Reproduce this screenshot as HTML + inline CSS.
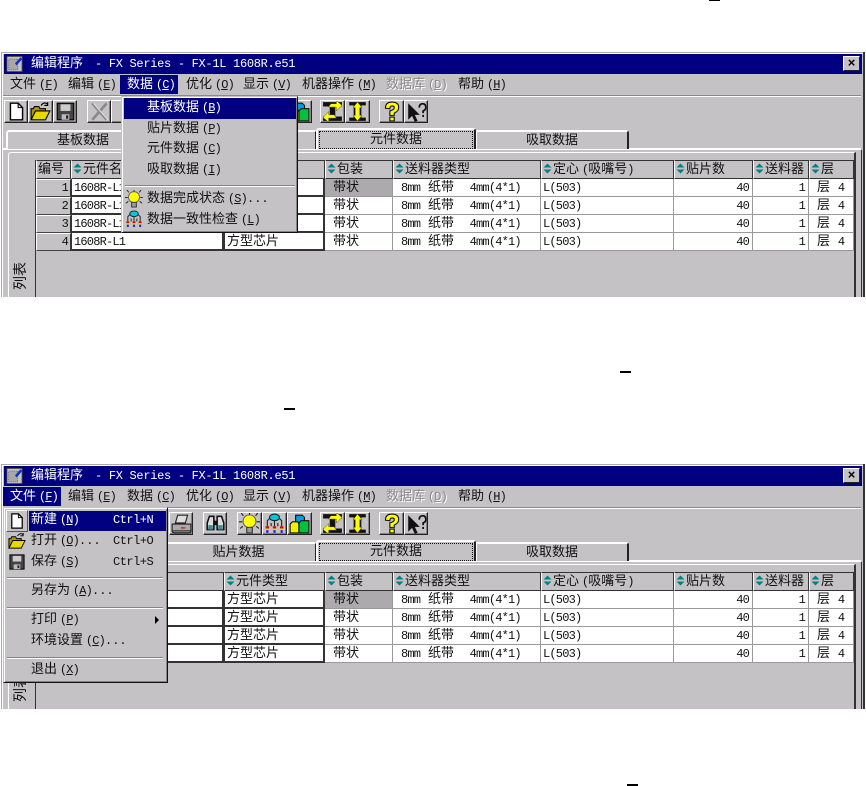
<!DOCTYPE html>
<html><head><meta charset="utf-8">
<style>
html,body{margin:0;padding:0;background:#fff}
body{width:866px;height:786px;position:relative;overflow:hidden;font-family:"Liberation Mono","WenQuanYi Zen Hei","Noto Sans CJK SC",monospace;font-size:13px;color:#111}
.w{position:absolute;left:0;width:866px;height:297px;overflow:hidden}
.a{position:absolute}
.t{position:absolute;white-space:nowrap;line-height:16px}
i{font-style:normal;font-size:12px;letter-spacing:-.8px;word-spacing:-3.6px}
.dash{position:absolute;background:#000;height:2px;width:11px}
.btn{position:absolute;top:100px;height:23px;background:#c4c2c4;border:1px solid;border-color:#fff #222 #222 #fff;box-sizing:border-box;box-shadow:inset -1px -1px 0 #848284}
.btn svg{position:absolute;left:1px;top:0;width:21px;height:21px}
.tab{position:absolute;top:129px;height:19px;box-sizing:border-box;background:#c4c2c4;border-top:2px solid #fff;border-left:2px solid #fff;border-right:2px solid #222;border-radius:3px 3px 0 0;text-align:center;line-height:17px}
table{position:absolute;left:36px;top:160px;border-collapse:separate;border-spacing:0;table-layout:fixed;width:818px;font-size:13px}
td,th{padding:0;margin:0;box-sizing:border-box;white-space:nowrap;overflow:hidden;font-weight:normal;text-align:left;vertical-align:middle;line-height:14px}
th{background:#c4c2c4;height:19px;border:1px solid;border-color:#333 #333 #333 #fff;padding-left:1px}
th svg{width:9px;height:11px;vertical-align:-1px;margin-right:1px}
td{background:#fff;border-right:1px solid #999;border-bottom:1px solid #999;padding-left:2px}
td.n{background:#c4c2c4;text-align:right;padding-right:2px;border:1px solid;border-color:#fff #333 #444 #fff}
td.s{border:0 solid #333;border-width:0 2px 2px 1px;padding-top:2px}
td.g{background:#acaaac}
td.r{text-align:right;padding-right:3px}
td.p{padding-left:8px}
td.f{padding-left:8px;white-space:pre}
.menu{position:absolute;background:#c4c2c4;border:1px solid;border-color:#c4c2c4 #111 #111 #c4c2c4;box-shadow:inset 1px 1px 0 #fff,inset -1px -1px 0 #848284;box-sizing:border-box}
.hl{position:absolute;background:#000080}
.sep{position:absolute;height:1px;background:#848284;border-bottom:1px solid #fff}
.wt{color:#fff}
.gr{color:#8a888a;text-shadow:1px 1px 0 #fff}
.vt{position:absolute;left:8px;top:268px;width:28px;height:16px;line-height:16px;font-size:14px;text-align:center;white-space:nowrap;transform:rotate(-90deg)}
</style></head>
<body>
<svg width="0" height="0" style="position:absolute">
<defs>
<symbol id="sort" viewBox="0 0 9 11"><path d="M4.500 0.500 8.500 4.500H.5zM.5 6.500H8.500L4.500 10.500z" fill="#008284"/></symbol>
<symbol id="new" viewBox="0 0 19 19"><path d="M4 2H11L15 6V17H4z" fill="#fff" stroke="#000" stroke-width="1.3"/><path d="M11 2V6H15" fill="none" stroke="#000"/></symbol>
<symbol id="open" viewBox="0 0 19 19"><path d="M1 17V7H3L4 5H8L9 7H14V9" fill="#a89800" stroke="#000"/><path d="M1 17 5 9H18L14 17z" fill="#e8d800" stroke="#000"/><path d="M10 4Q13 0 16 3M16 1V4H13" fill="none" stroke="#000"/></symbol>
<symbol id="save" viewBox="0 0 19 19"><path d="M2 2H17V17H2z" fill="#444" stroke="#000"/><path d="M5 3H14V9H5z" fill="#ccc"/><path d="M6 12H13V17H6z" fill="#bbb"/><path d="M10 13H12V16H10z" fill="#222"/></symbol>
<symbol id="cut" viewBox="0 0 19 19"><path d="M3 2 16 17M16 2 3 17" stroke="#8a888a" stroke-width="2.400" fill="none"/><path d="M4 2 17 17" stroke="#eee" stroke-width=".8"/></symbol>
<symbol id="print" viewBox="0 0 19 19"><path d="M6 2H15L13 9H4z" fill="#ddd" stroke="#222"/><path d="M1 10H18V16H1z" fill="#aaa" stroke="#222"/><path d="M1 16Q1 18 3 18H16Q18 18 18 16" fill="#777" stroke="#222"/><path d="M9 13H13V14H9z" fill="#d00"/></symbol>
<symbol id="bino" viewBox="0 0 19 19"><path d="M4 3H8V15H2V9zM11 3H15L17 9V15H11z" fill="#ddd" stroke="#111" stroke-width="1.400"/><path d="M8 7H11V11H8z" fill="#111"/><path d="M3 11H7V15H3zM12 11H16V15H12z" fill="#3f8a94"/></symbol>
<symbol id="bulb" viewBox="0 0 19 19"><circle cx="9.500" cy="7.500" r="5.800" fill="#ffff00" stroke="#666"/><path d="M7 13H12V18H7z" fill="#999" stroke="#333"/><path d="M9.500 0V1.500M2 0 4 2.500M17 0 15 2.500M0 8H3M16 8H19M1 14 3.500 12M18 14 15.500 12" stroke="#222"/></symbol>
<symbol id="net" viewBox="0 0 19 19"><ellipse cx="9.500" cy="4" rx="4.500" ry="3" fill="#00c8e0" stroke="#222"/><path d="M5 5 3 7V12M14 5 16 7V12M9.500 7V12M6.500 9V12M12.500 9V12" stroke="#222" fill="none"/><path d="M1.500 12H4.500V14H1.500zM8 12H11V14H8zM14.500 12H17.500V14H14.500z" fill="#e00000"/><path d="M1.500 14H4.500V15.500H1.500zM8 14H11V15.500H8zM14.500 14H17.500V15.500H14.500z" fill="#e8e000"/><path d="M2 15.500H4V18H2zM8.500 15.500H10.500V18H8.500zM15 15.500H17V18H15z" fill="#2020e0"/></symbol>
<symbol id="blocks" viewBox="0 0 19 19"><path d="M6 2H12L14 4V10H6z" fill="#00a0e0" stroke="#111"/><path d="M1 10 3 8H8L9 10V18H1z" fill="#f0f000" stroke="#111"/><path d="M9 9 11 7H18V18H9z" fill="#00c040" stroke="#111"/></symbol>
<symbol id="swap" viewBox="0 0 19 19"><path d="M1 1H18V5H12V14H18V18H1V14H7V5H1z" fill="#111"/><path d="M1 15 6 9.500V12.500H11L13 15.500H6V19zM18 4 13 -.5V2.500H8L6 5.500H13V9z" fill="#ffff00" stroke="#444" stroke-width=".4"/></symbol>
<symbol id="ibeam" viewBox="0 0 19 19"><path d="M2 1H17V4H13V15H17V18H2V15H6V4H2z" fill="#111"/><path d="M9.500 1 13.500 6H11.500V13H13.500L9.500 18 5.500 13H7.500V6H5.500z" fill="#ffff00" stroke="#444" stroke-width=".4"/></symbol>
<symbol id="help" viewBox="0 0 19 19"><path d="M4 6.500Q4 1 10 1Q16 1 16 6Q16 9 12 11V13H8V9Q12 8 12 6Q12 4.500 10 4.500Q8 4.500 8 7z" fill="#ffff00" stroke="#111" stroke-width="1"/><path d="M8 14.500H12V18H8z" fill="#ffff00" stroke="#111" stroke-width="1"/></symbol>
<symbol id="arrq" viewBox="0 0 19 19"><path d="M2 2V17L5.500 13.500 8 19 10.500 18 8 12.500H12.500z" fill="#111"/><path d="M12 6Q12 2.500 15 2.500Q18 2.500 18 6Q18 8 15.500 9V11M15.500 12.500V14.500" fill="none" stroke="#111" stroke-width="1.600"/></symbol>
<symbol id="app" viewBox="0 0 19 19"><path d="M1 1H18V18H1z" fill="#c4c2c4" stroke="#444"/><path d="M3 4H13V16H3z" fill="#a8a8a8" stroke="#666" stroke-dasharray="1 1"/><path d="M10 9 16 2 18 4 12 11z" fill="#1030d0"/></symbol>
</defs>
</svg>

<div class="dash" style="left:709px;top:-1px"></div>
<div class="dash" style="left:620px;top:371px"></div>
<div class="dash" style="left:284px;top:408px"></div>
<div class="dash" style="left:627px;top:784px"></div>

<!-- WINDOW 1 -->
<div class="w" style="top:0">
<div class="a" style="left:1px;top:52px;width:864px;height:246px;background:#c4c2c4;border-top:1px solid #aaa;border-left:1px solid #aaa;box-sizing:border-box;box-shadow:inset 1px 1px 0 #fff"></div>
<div class="a" style="left:863px;top:52px;width:2px;height:246px;background:#333"></div>
<div class="a" style="left:4px;top:54px;width:858px;height:20px;background:#000080"></div>
<svg class="a" style="left:6px;top:55px;width:17px;height:18px"><use href="#app"/></svg>
<div class="t wt" style="left:31px;top:56px;font-size:13px">编辑程序<i style="letter-spacing:-.3px;word-spacing:0;margin-left:12px">- FX Series - FX-1L 1608R.e51</i></div>
<div class="a" style="left:843px;top:56px;width:17px;height:15px;background:#c4c2c4;border:1px solid;border-color:#fff #222 #222 #fff;box-sizing:border-box;text-align:center;font:bold 13px/12px 'Liberation Sans',sans-serif;color:#000">×</div>
<div class="a" style="left:3px;top:95px;width:858px;height:1px;background:#8a888a;border-bottom:1px solid #fff"></div>
<div class="hl" style="left:120px;top:75px;width:58px;height:19px"></div>
<div class="t" style="left:10px;top:77px">文件<i> (<u>F</u>)</i></div>
<div class="t" style="left:68px;top:77px">编辑<i> (<u>E</u>)</i></div>
<div class="t wt" style="left:127px;top:77px">数据<i> (<u>C</u>)</i></div>
<div class="t" style="left:186px;top:77px">优化<i> (<u>O</u>)</i></div>
<div class="t" style="left:243px;top:77px">显示<i> (<u>V</u>)</i></div>
<div class="t" style="left:302px;top:77px">机器操作<i> (<u>M</u>)</i></div>
<div class="t gr" style="left:386px;top:77px">数据库<i> (<u>D</u>)</i></div>
<div class="t" style="left:458px;top:77px">帮助<i> (<u>H</u>)</i></div>

<div class="btn" style="left:4px;width:24px"><svg><use href="#new"/></svg></div>
<div class="btn" style="left:28px;width:25px"><svg><use href="#open"/></svg></div>
<div class="btn" style="left:53px;width:24px"><svg><use href="#save"/></svg></div>
<div class="btn" style="left:87px;width:24px"><svg><use href="#cut"/></svg></div>
<div class="btn" style="left:111px;width:24px"></div>
<div class="btn" style="left:287px;width:25px"><svg><use href="#blocks"/></svg></div>
<div class="btn" style="left:320px;width:25px"><svg><use href="#swap"/></svg></div>
<div class="btn" style="left:345px;width:25px"><svg><use href="#ibeam"/></svg></div>
<div class="btn" style="left:379px;width:25px"><svg><use href="#help"/></svg></div>
<div class="btn" style="left:404px;width:24px"><svg><use href="#arrq"/></svg></div>

<div class="a" style="left:3px;top:148px;width:858px;height:2px;background:#fff"></div>
<div class="tab" style="left:6px;width:154px;top:130px">基板数据</div>
<div class="tab" style="left:160px;width:157px;top:130px">贴片数据</div>
<div class="tab" style="left:475px;width:154px;top:130px">吸取数据</div>
<div class="tab" style="left:316px;width:160px;height:21px;top:128px;z-index:2"><div class="a" style="left:1px;top:1px;right:1px;height:16px;border:1px dotted #111;line-height:15px">元件数据</div></div>

<div class="a" style="left:8px;top:152px;width:848px;height:150px;border-left:1px solid #fff;border-top:1px solid #fff;border-right:2px solid #333;box-sizing:border-box;border-radius:3px 0 0 0"></div>
<div class="a" style="left:861px;top:150px;width:1px;height:150px;background:#333"></div>
<div class="a" style="left:35px;top:160px;width:1px;height:140px;background:#333"></div>
<div class="vt">列表</div>

<table><colgroup><col style="width:35px"><col style="width:153px"><col style="width:101px"><col style="width:68px"><col style="width:148px"><col style="width:133px"><col style="width:79px"><col style="width:56px"><col style="width:45px"></colgroup>
<tr><th>编号</th><th><svg><use href="#sort"/></svg>元件名称</th><th><svg><use href="#sort"/></svg>元件类型</th><th><svg><use href="#sort"/></svg>包装</th><th><svg><use href="#sort"/></svg>送料器类型</th><th><svg><use href="#sort"/></svg>定心<i> (</i>吸嘴号<i>)</i></th><th><svg><use href="#sort"/></svg>贴片数</th><th><svg><use href="#sort"/></svg>送料器</th><th><svg><use href="#sort"/></svg>层</th></tr>
<tr style="height:18px"><td class="n"><i>1</i></td><td class="s"><i>1608R-L1</i></td><td class="s">方型芯片</td><td class="p g">带状</td><td class="f"><i>8mm</i> 纸带  <i>4mm(4*1)</i></td><td><i>L(503)</i></td><td class="r"><i>40</i></td><td class="r"><i>1</i></td><td class="p">层 <i>4</i></td></tr>
<tr style="height:18px"><td class="n"><i>2</i></td><td class="s"><i>1608R-L1</i></td><td class="s">方型芯片</td><td class="p">带状</td><td class="f"><i>8mm</i> 纸带  <i>4mm(4*1)</i></td><td><i>L(503)</i></td><td class="r"><i>40</i></td><td class="r"><i>1</i></td><td class="p">层 <i>4</i></td></tr>
<tr style="height:18px"><td class="n"><i>3</i></td><td class="s"><i>1608R-L1</i></td><td class="s">方型芯片</td><td class="p">带状</td><td class="f"><i>8mm</i> 纸带  <i>4mm(4*1)</i></td><td><i>L(503)</i></td><td class="r"><i>40</i></td><td class="r"><i>1</i></td><td class="p">层 <i>4</i></td></tr>
<tr style="height:18px"><td class="n"><i>4</i></td><td class="s"><i>1608R-L1</i></td><td class="s">方型芯片</td><td class="p">带状</td><td class="f"><i>8mm</i> 纸带  <i>4mm(4*1)</i></td><td><i>L(503)</i></td><td class="r"><i>40</i></td><td class="r"><i>1</i></td><td class="p">层 <i>4</i></td></tr>
</table>

<div class="menu" style="left:121px;top:96px;width:177px;height:137px;z-index:5">
<div class="hl" style="left:2px;top:1px;width:172px;height:21px"></div>
<div class="t wt" style="left:25px;top:3px">基板数据<i> (<u>B</u>)</i></div>
<div class="t" style="left:25px;top:24px">贴片数据<i> (<u>P</u>)</i></div>
<div class="t" style="left:25px;top:44px">元件数据<i> (<u>C</u>)</i></div>
<div class="t" style="left:25px;top:65px">吸取数据<i> (<u>I</u>)</i></div>
<div class="sep" style="left:3px;top:88px;width:170px"></div>
<svg class="a" style="left:3px;top:93px;width:18px;height:18px"><use href="#bulb"/></svg>
<div class="t" style="left:25px;top:94px">数据完成状态<i> (<u>S</u>)</i><i style="letter-spacing:0">...</i></div>
<svg class="a" style="left:3px;top:113px;width:18px;height:18px"><use href="#net"/></svg>
<div class="t" style="left:25px;top:115px">数据一致性检查<i> (<u>L</u>)</i></div>
</div>
</div>

<!-- WINDOW 2 -->
<div class="w" style="top:412px">
<div class="a" style="left:1px;top:52px;width:864px;height:246px;background:#c4c2c4;border-top:1px solid #aaa;border-left:1px solid #aaa;box-sizing:border-box;box-shadow:inset 1px 1px 0 #fff"></div>
<div class="a" style="left:863px;top:52px;width:2px;height:246px;background:#333"></div>
<div class="a" style="left:4px;top:54px;width:858px;height:20px;background:#000080"></div>
<svg class="a" style="left:6px;top:55px;width:17px;height:18px"><use href="#app"/></svg>
<div class="t wt" style="left:31px;top:56px;font-size:13px">编辑程序<i style="letter-spacing:-.3px;word-spacing:0;margin-left:12px">- FX Series - FX-1L 1608R.e51</i></div>
<div class="a" style="left:843px;top:56px;width:17px;height:15px;background:#c4c2c4;border:1px solid;border-color:#fff #222 #222 #fff;box-sizing:border-box;text-align:center;font:bold 13px/12px 'Liberation Sans',sans-serif;color:#000">×</div>
<div class="a" style="left:3px;top:95px;width:858px;height:1px;background:#8a888a;border-bottom:1px solid #fff"></div>
<div class="hl" style="left:3px;top:75px;width:58px;height:19px"></div>
<div class="t wt" style="left:10px;top:77px">文件<i> (<u>F</u>)</i></div>
<div class="t" style="left:68px;top:77px">编辑<i> (<u>E</u>)</i></div>
<div class="t" style="left:127px;top:77px">数据<i> (<u>C</u>)</i></div>
<div class="t" style="left:186px;top:77px">优化<i> (<u>O</u>)</i></div>
<div class="t" style="left:243px;top:77px">显示<i> (<u>V</u>)</i></div>
<div class="t" style="left:302px;top:77px">机器操作<i> (<u>M</u>)</i></div>
<div class="t gr" style="left:386px;top:77px">数据库<i> (<u>D</u>)</i></div>
<div class="t" style="left:458px;top:77px">帮助<i> (<u>H</u>)</i></div>

<div class="btn" style="left:169px;width:24px"><svg><use href="#print"/></svg></div>
<div class="btn" style="left:203px;width:24px"><svg><use href="#bino"/></svg></div>
<div class="btn" style="left:237px;width:25px"><svg><use href="#bulb"/></svg></div>
<div class="btn" style="left:262px;width:25px"><svg><use href="#net"/></svg></div>
<div class="btn" style="left:287px;width:25px"><svg><use href="#blocks"/></svg></div>
<div class="btn" style="left:320px;width:25px"><svg><use href="#swap"/></svg></div>
<div class="btn" style="left:345px;width:25px"><svg><use href="#ibeam"/></svg></div>
<div class="btn" style="left:379px;width:25px"><svg><use href="#help"/></svg></div>
<div class="btn" style="left:404px;width:24px"><svg><use href="#arrq"/></svg></div>

<div class="a" style="left:3px;top:148px;width:858px;height:2px;background:#fff"></div>
<div class="tab" style="left:6px;width:154px;top:130px">基板数据</div>
<div class="tab" style="left:160px;width:157px;top:130px">贴片数据</div>
<div class="tab" style="left:475px;width:154px;top:130px">吸取数据</div>
<div class="tab" style="left:316px;width:160px;height:21px;top:128px;z-index:2"><div class="a" style="left:1px;top:1px;right:1px;height:16px;border:1px dotted #111;line-height:15px">元件数据</div></div>

<div class="a" style="left:8px;top:152px;width:848px;height:150px;border-left:1px solid #fff;border-top:1px solid #fff;border-right:2px solid #333;box-sizing:border-box;border-radius:3px 0 0 0"></div>
<div class="a" style="left:861px;top:150px;width:1px;height:150px;background:#333"></div>
<div class="a" style="left:35px;top:160px;width:1px;height:140px;background:#333"></div>
<div class="vt">列表</div>

<table><colgroup><col style="width:35px"><col style="width:153px"><col style="width:101px"><col style="width:68px"><col style="width:148px"><col style="width:133px"><col style="width:79px"><col style="width:56px"><col style="width:45px"></colgroup>
<tr><th>编号</th><th><svg><use href="#sort"/></svg>元件名称</th><th><svg><use href="#sort"/></svg>元件类型</th><th><svg><use href="#sort"/></svg>包装</th><th><svg><use href="#sort"/></svg>送料器类型</th><th><svg><use href="#sort"/></svg>定心<i> (</i>吸嘴号<i>)</i></th><th><svg><use href="#sort"/></svg>贴片数</th><th><svg><use href="#sort"/></svg>送料器</th><th><svg><use href="#sort"/></svg>层</th></tr>
<tr style="height:18px"><td class="n"><i>1</i></td><td class="s"><i>1608R-L1</i></td><td class="s">方型芯片</td><td class="p g">带状</td><td class="f"><i>8mm</i> 纸带  <i>4mm(4*1)</i></td><td><i>L(503)</i></td><td class="r"><i>40</i></td><td class="r"><i>1</i></td><td class="p">层 <i>4</i></td></tr>
<tr style="height:18px"><td class="n"><i>2</i></td><td class="s"><i>1608R-L1</i></td><td class="s">方型芯片</td><td class="p">带状</td><td class="f"><i>8mm</i> 纸带  <i>4mm(4*1)</i></td><td><i>L(503)</i></td><td class="r"><i>40</i></td><td class="r"><i>1</i></td><td class="p">层 <i>4</i></td></tr>
<tr style="height:18px"><td class="n"><i>3</i></td><td class="s"><i>1608R-L1</i></td><td class="s">方型芯片</td><td class="p">带状</td><td class="f"><i>8mm</i> 纸带  <i>4mm(4*1)</i></td><td><i>L(503)</i></td><td class="r"><i>40</i></td><td class="r"><i>1</i></td><td class="p">层 <i>4</i></td></tr>
<tr style="height:18px"><td class="n"><i>4</i></td><td class="s"><i>1608R-L1</i></td><td class="s">方型芯片</td><td class="p">带状</td><td class="f"><i>8mm</i> 纸带  <i>4mm(4*1)</i></td><td><i>L(503)</i></td><td class="r"><i>40</i></td><td class="r"><i>1</i></td><td class="p">层 <i>4</i></td></tr>
</table>

<div class="menu" style="left:3px;top:95px;width:165px;height:176px;z-index:5">
<div class="a" style="left:2px;top:2px;width:22px;height:22px;border:1px solid;border-color:#fff #555 #555 #fff;box-sizing:border-box"><svg class="a" style="left:1px;top:1px;width:18px;height:18px"><use href="#new"/></svg></div>
<div class="hl" style="left:25px;top:3px;width:137px;height:20px"></div>
<div class="t wt" style="left:27px;top:4px">新建<i> (<u>N</u>)</i></div><div class="t wt" style="left:109px;top:4px"><i style="letter-spacing:-.5px">Ctrl+N</i></div>
<svg class="a" style="left:4px;top:24px;width:18px;height:18px"><use href="#open"/></svg>
<div class="t" style="left:27px;top:25px">打开<i> (<u>O</u>)</i><i style="letter-spacing:0">...</i></div><div class="t" style="left:109px;top:25px"><i style="letter-spacing:-.5px">Ctrl+O</i></div>
<svg class="a" style="left:4px;top:45px;width:18px;height:18px"><use href="#save"/></svg>
<div class="t" style="left:27px;top:46px">保存<i> (<u>S</u>)</i></div><div class="t" style="left:109px;top:46px"><i style="letter-spacing:-.5px">Ctrl+S</i></div>
<div class="sep" style="left:3px;top:69px;width:156px"></div>
<div class="t" style="left:27px;top:75px">另存为<i> (<u>A</u>)</i><i style="letter-spacing:0">...</i></div>
<div class="sep" style="left:3px;top:99px;width:156px"></div>
<div class="t" style="left:27px;top:104px">打印<i> (<u>P</u>)</i></div>
<div class="a" style="left:151px;top:108px;width:0;height:0;border-left:4px solid #000;border-top:4px solid transparent;border-bottom:4px solid transparent"></div>
<div class="t" style="left:27px;top:125px">环境设置<i> (<u>C</u>)</i><i style="letter-spacing:0">...</i></div>
<div class="sep" style="left:3px;top:149px;width:156px"></div>
<div class="t" style="left:27px;top:154px">退出<i> (<u>X</u>)</i></div>
</div>
</div>
</body></html>
